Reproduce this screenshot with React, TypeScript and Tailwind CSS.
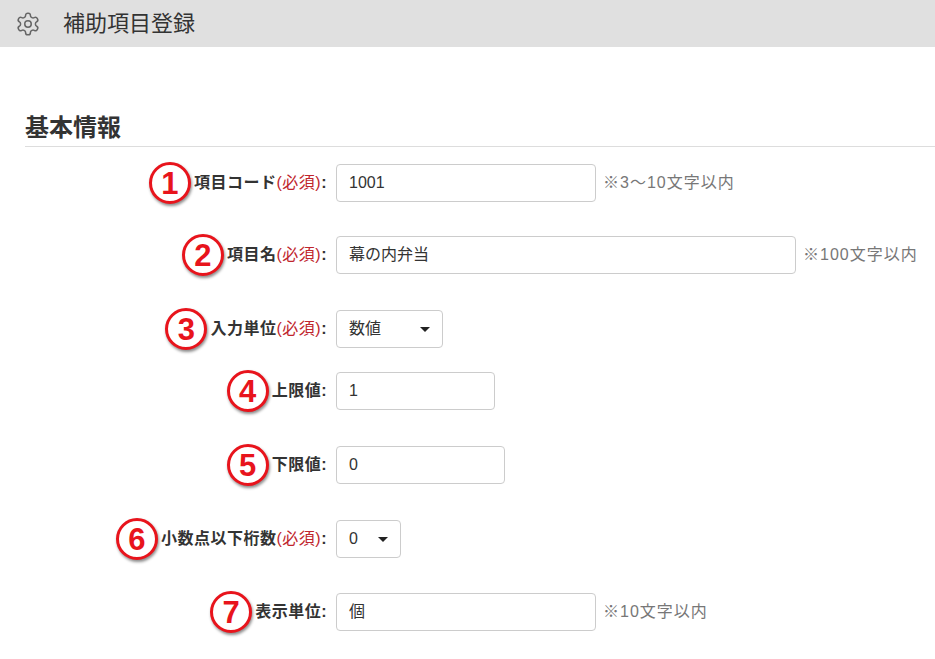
import React from "react";

const F = { fontFamily: '"Liberation Sans","Noto Sans CJK JP",sans-serif' };

function Badge({ n }: { n: number }) {
  return (
    <div className="w-[42px] h-[42px] rounded-full border-[3px] border-[#e8141c] bg-white flex items-center justify-center text-[#e8141c] font-bold text-[31px] leading-none shadow-[1px_2px_3px_rgba(0,0,0,0.45)] mr-[3px]">
      {n}
    </div>
  );
}

function Caret() {
  return <span className="inline-block w-0 h-0 border-l-[5px] border-r-[5px] border-t-[5px] border-l-transparent border-r-transparent border-t-[#222]" />;
}

function Row({ n, label, req, mt, children, hint }: any) {
  return (
    <div className={`flex items-center h-[38px] ${mt}`}>
      <div className="w-[327px] flex justify-end items-center">
        <Badge n={n} />
        <span className="text-[16px] font-bold text-[#333] tracking-[0.5px]">
          {label}
          {req && <span className="font-normal text-[#c0262d]">(必須)</span>}:
        </span>
      </div>
      <div className="ml-[9px] flex items-center">
        {children}
        {hint && <span className="ml-[7px] text-[16px] text-[#777] tracking-[1px]">{hint}</span>}
      </div>
    </div>
  );
}

const box = "h-[38px] border border-[#ccc] rounded-[4px] bg-white flex items-center px-[12px] text-[16px] text-[#333]";

export default function App() {
  return (
    <div className="w-[935px] h-[659px] bg-white overflow-hidden" style={F}>
      <div className="h-[47px] bg-[#e0e0e0] flex items-center pl-[15px]">
        <svg width="26" height="26" viewBox="0 0 24 24" fill="none" stroke="#666" strokeWidth="1.4" strokeLinecap="round" strokeLinejoin="round">
          <path d="M12.22 2h-.44a2 2 0 0 0-2 2v.18a2 2 0 0 1-1 1.73l-.43.25a2 2 0 0 1-2 0l-.15-.08a2 2 0 0 0-2.730.73l-.22.38a2 2 0 0 0 .73 2.73l.15.1a2 2 0 0 1 1 1.72v.51a2 2 0 0 1-1 1.74l-.15.09a2 2 0 0 0-.73 2.73l.22.38a2 2 0 0 0 2.73.73l.15-.08a2 2 0 0 1 2 0l.43.25a2 2 0 0 1 1 1.73V20a2 2 0 0 0 2 2h.44a2 2 0 0 0 2-2v-.18a2 2 0 0 1 1-1.73l.43-.25a2 2 0 0 1 2 0l.15.08a2 2 0 0 0 2.73-.73l.22-.39a2 2 0 0 0-.73-2.73l-.15-.08a2 2 0 0 1-1-1.74v-.5a2 2 0 0 1 1-1.74l.15-.09a2 2 0 0 0 .73-2.730l-.22-.38a2 2 0 0 0-2.73-.73l-.15.08a2 2 0 0 1-2 0l-.43-.25a2 2 0 0 1-1-1.73V4a2 2 0 0 0-2-2z" />
          <circle cx="12" cy="12" r="3" />
        </svg>
        <span className="ml-[22px] text-[22px] text-[#333]">補助項目登録</span>
      </div>
      <div className="ml-[25px] mt-[66px] border-b border-[#ddd] pb-[3px]">
        <div className="text-[24px] font-bold text-[#333] leading-[30px]">基本情報</div>
      </div>
      <Row n={1} label="項目コード" req mt="mt-[17px]" hint="※3～10文字以内">
        <div className={`${box} w-[260px]`}>1001</div>
      </Row>
      <Row n={2} label="項目名" req mt="mt-[34px]" hint="※100文字以内">
        <div className={`${box} w-[460px]`}>幕の内弁当</div>
      </Row>
      <Row n={3} label="入力単位" req mt="mt-[36px]">
        <div className={`${box} w-[107px] justify-between`}>数値<Caret /></div>
      </Row>
      <Row n={4} label="上限値" mt="mt-[24px]">
        <div className={`${box} w-[159px]`}>1</div>
      </Row>
      <Row n={5} label="下限値" mt="mt-[36px]">
        <div className={`${box} w-[169px]`}>0</div>
      </Row>
      <Row n={6} label="小数点以下桁数" req mt="mt-[36px]">
        <div className={`${box} w-[65px] justify-between`}>0<Caret /></div>
      </Row>
      <Row n={7} label="表示単位" mt="mt-[35px]" hint="※10文字以内">
        <div className={`${box} w-[260px]`}>個</div>
      </Row>
    </div>
  );
}
